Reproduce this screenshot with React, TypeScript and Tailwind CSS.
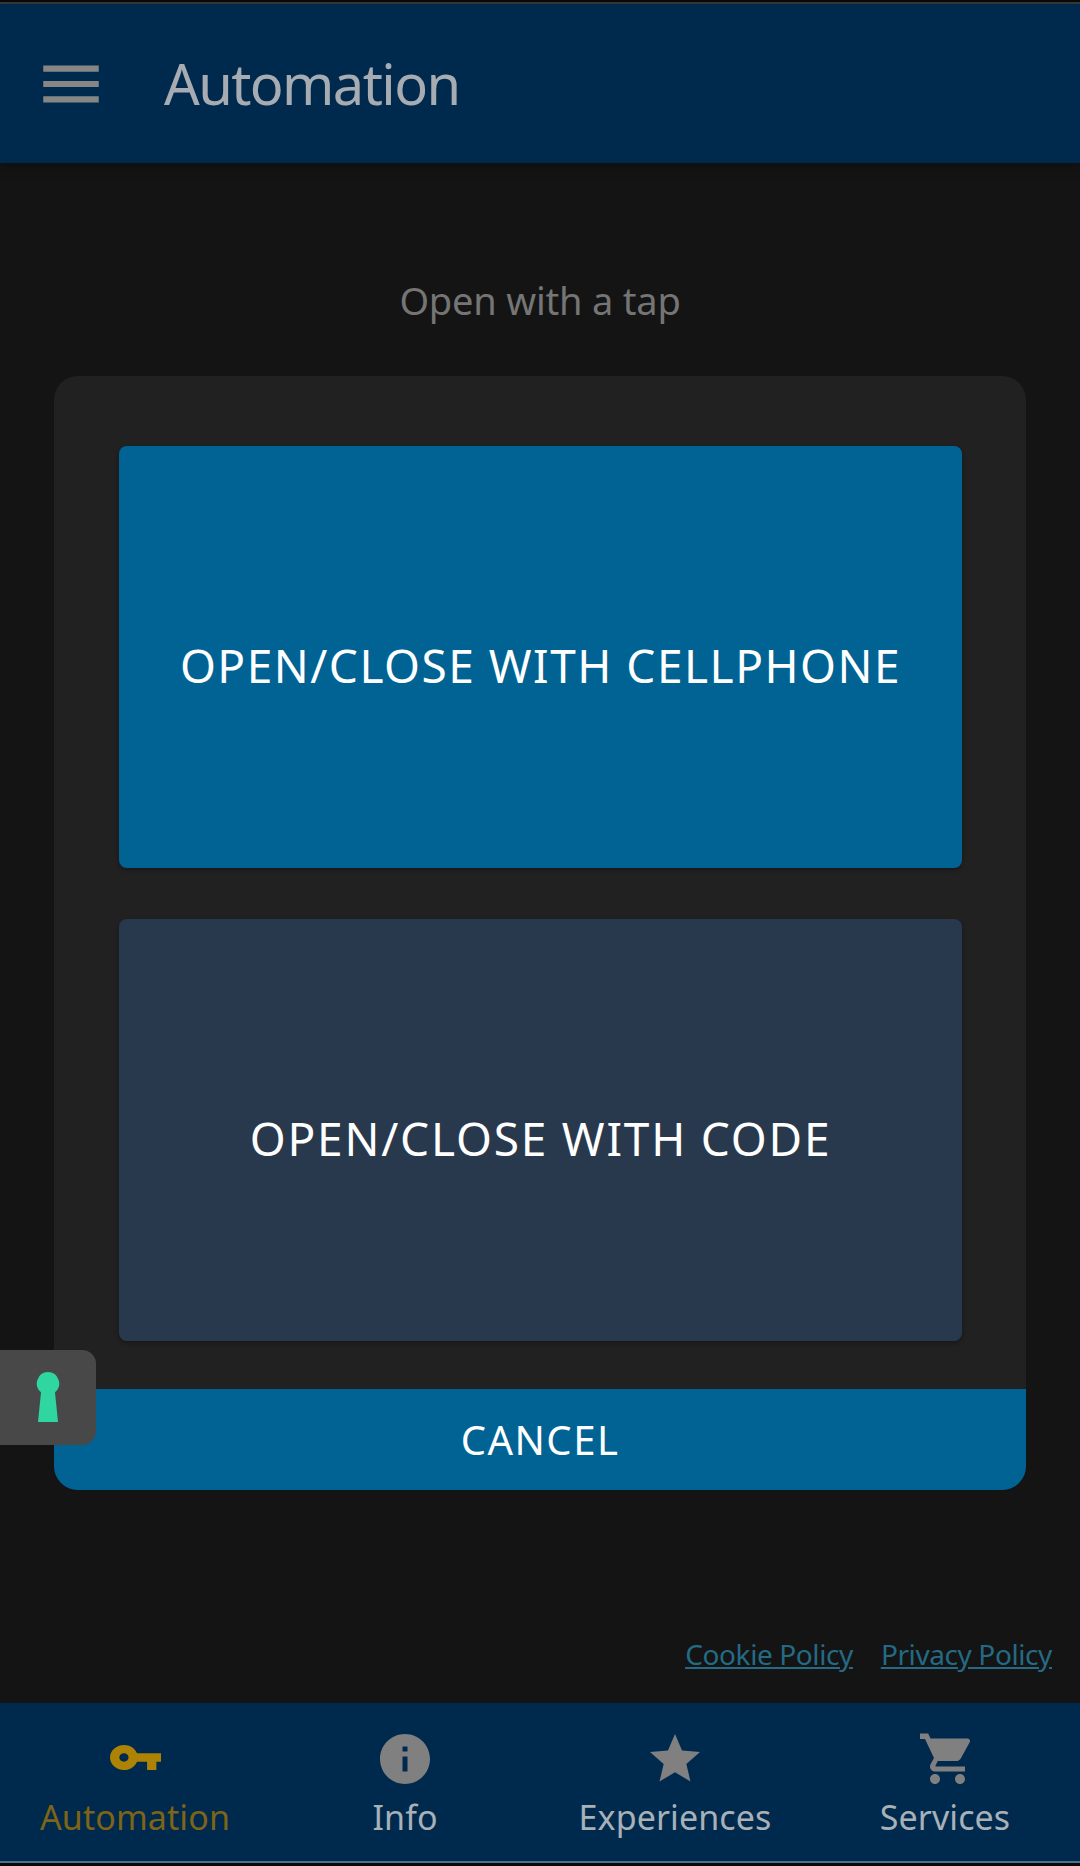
const font = "font-['Noto_Sans','Open_Sans',sans-serif]";

function Tab({ label, color, children }: { label: string; color: string; children: React.ReactNode }) {
  return (
    <div className="flex flex-col items-center">
      <div className="flex h-[60px] w-[60px] items-center justify-center">{children}</div>
      <span className={`mt-[5px] text-[34px] leading-[46px] tracking-[0.1px] ${color}`}>{label}</span>
    </div>
  );
}

export default function App() {
  return (
    <div className={`relative flex h-[1866px] w-[1080px] flex-col overflow-hidden bg-[#141414] ${font}`}>
      <div className="h-[2px] bg-[#0a0a0a]" />
      <div className="h-[2px] bg-[#3a3a3a]" />
      <header className="flex h-[159px] items-center bg-[#002a4d] pl-[34px] shadow-[0_3px_12px_rgba(0,0,0,0.3)]">
        <svg width="74" height="74" viewBox="0 0 24 24" fill="#868686">
          <path d="M3 18h18v-2H3v2zm0-5h18v-2H3v2zm0-7v2h18V6H3z" />
        </svg>
        <h1 className="mb-[2px] ml-[56px] text-[56px] font-normal leading-[72px] tracking-[-1.6px] text-[#a6acb2]">Automation</h1>
      </header>

      <main className="flex flex-1 flex-col">
        <p className="mt-[112px] text-center text-[38px] font-normal leading-[50px] tracking-[-0.2px] text-[#757575]">Open with a tap</p>
        <section className="mx-[54px] mt-[51px] flex flex-col overflow-hidden rounded-[24px] bg-[#212121]">
          <div className="flex flex-col gap-[51px] pb-[48px] pl-[65px] pr-[64px] pt-[70px]">
            <button className="h-[422px] rounded-[8px] bg-[#006394] pt-[16px] text-[46px] tracking-[1.5px] text-white shadow-[0_2px_4px_rgba(0,0,0,0.3)]">
              OPEN/CLOSE WITH CELLPHONE
            </button>
            <button className="h-[422px] rounded-[8px] bg-[#29394d] pt-[16px] text-[46px] tracking-[1.8px] text-white shadow-[0_2px_4px_rgba(0,0,0,0.3)]">
              OPEN/CLOSE WITH CODE
            </button>
          </div>
          <button className="h-[101px] bg-[#006394] text-[40px] tracking-[1.5px] text-white">CANCEL</button>
        </section>
        <div className="mt-auto flex justify-end gap-[28px] pb-[29px] pr-[28px] text-[28px] leading-[39px] tracking-[-0.4px] text-[#256a85] underline">
          <a>Cookie Policy</a>
          <a>Privacy Policy</a>
        </div>
      </main>

      <nav className="grid h-[158px] grid-cols-4 bg-[#002a4d] pt-[26px]">
        <Tab label="Automation" color="text-[#7d6417]">
          <svg className="mb-[3px]" width="51" height="25" viewBox="1 6 22 12" preserveAspectRatio="none" fill="#ac8304">
            <path d="M12.65 10C11.83 7.67 9.61 6 7 6c-3.31 0-6 2.69-6 6s2.69 6 6 6c2.61 0 4.83-1.67 5.65-4H17v4h4v-4h2v-4H12.65zM7 14c-1.1 0-2-.9-2-2s.9-2 2-2 2 .9 2 2-.9 2-2 2z" />
          </svg>
        </Tab>
        <Tab label="Info" color="text-[#a8b0b8]">
          <svg width="60" height="60" viewBox="0 0 24 24" fill="#808080">
            <path d="M12 2C6.48 2 2 6.48 2 12s4.48 10 10 10 10-4.48 10-10S17.52 2 12 2zm1 15h-2v-6h2v6zm0-8h-2V7h2v2z" />
          </svg>
        </Tab>
        <Tab label="Experiences" color="text-[#a8b0b8]">
          <svg width="60" height="60" viewBox="0 0 24 24" fill="#808080">
            <path d="M12 17.27L18.18 21l-1.64-7.03L22 9.24l-7.19-.61L12 2 9.19 8.63 2 9.24l5.46 4.73L5.82 21z" />
          </svg>
        </Tab>
        <Tab label="Services" color="text-[#a8b0b8]">
          <svg width="60" height="60" viewBox="-1 0 24 24" fill="#808080">
            <path d="M7 18c-1.1 0-1.99.9-1.99 2S5.9 22 7 22s2-.9 2-2-.9-2-2-2zM1 2v2h2l3.6 7.59-1.35 2.45c-.16.28-.25.61-.25.96 0 1.1.9 2 2 2h12v-2H7.42c-.14 0-.25-.11-.25-.25l.03-.12.9-1.83h7.45c.75 0 1.41-.41 1.75-1.03l3.58-6.47c.08-.14.12-.31.12-.48 0-.55-.45-1-1-1H5.21l-.94-2H1zm16 16c-1.1 0-1.99.9-1.99 2s.89 2 1.99 2 2-.9 2-2-.9-2-2-2z" />
          </svg>
        </Tab>
      </nav>
      <div className="h-[2px] bg-[#4f6f8f]" />
      <div className="h-[3px] bg-[#0a0a0a]" />

      <div className="absolute left-0 top-[1350px] flex h-[95px] w-[96px] items-center justify-center rounded-r-[14px] bg-[#484848]">
        <svg className="mb-[2px]" width="24" height="52" viewBox="0 0 24 52" fill="#2fd6a0">
          <path d="M12 1a11.4 11.4 0 0 1 7 20.2L22 51H2L5 21.2A11.4 11.4 0 0 1 12 1z" />
        </svg>
      </div>
    </div>
  );
}
